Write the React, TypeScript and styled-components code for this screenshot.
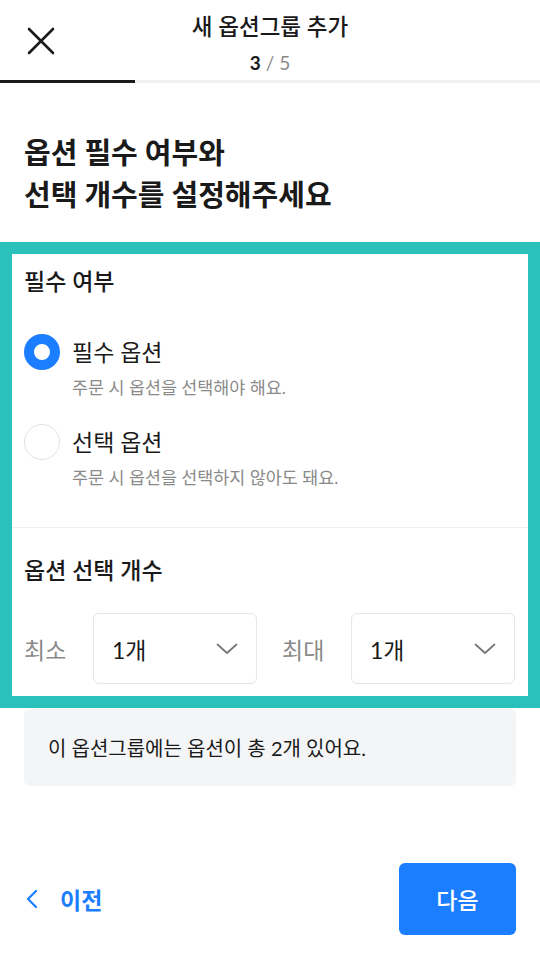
import React from "react";
import styled, { createGlobalStyle } from "styled-components";

const Global = createGlobalStyle`
  * { box-sizing: border-box; }
  html, body { margin: 0; padding: 0; background: #fff; }
  body { font-family: Lato, "Noto Sans CJK KR", sans-serif; color: #1a1a1a; }
`;

const Page = styled.div`
  width: 540px;
  height: 960px;
  display: flex;
  flex-direction: column;
  background: #fff;
  overflow: hidden;
`;

const Header = styled.header`
  position: relative;
  height: 80px;
  display: flex;
  flex-direction: column;
  align-items: center;
  padding-top: 12px;
`;

const CloseButton = styled.button`
  position: absolute;
  left: 26px;
  top: 26px;
  width: 30px;
  height: 30px;
  padding: 0;
  border: none;
  background: none;
  display: flex;
  align-items: center;
  justify-content: center;
`;

const Title = styled.h1`
  margin: 0;
  font-size: 22.5px;
  line-height: 30px;
  font-weight: 500;
  color: #1a1a1a;
`;

const Step = styled.div`
  margin-top: 10px;
  font-size: 19px;
  line-height: 22px;
  color: #8a8a8a;
  b { color: #1a1a1a; font-weight: 700; }
`;

const Progress = styled.div`
  height: 3px;
  background: #f2f2f2;
`;

const ProgressFill = styled.div`
  height: 100%;
  background: #1a1a1a;
`;

const Heading = styled.h2`
  margin: 49px 24px 0;
  font-size: 29px;
  line-height: 42px;
  font-weight: 700;
  color: #1a1a1a;
`;

const Highlight = styled.section`
  margin-top: 26px;
  border: 12px solid #2cc0bb;
  background: #fff;
`;

const Group = styled.div<{ $divider?: boolean }>`
  padding: ${(p) => (p.$divider ? "27px" : "12px")} 12px 0;
  border-top: ${(p) => (p.$divider ? "1px solid #efefef" : "none")};
`;

const GroupTitle = styled.h3`
  margin: 0;
  font-size: 23px;
  line-height: 30px;
  font-weight: 500;
  color: #1a1a1a;
`;

const RadioList = styled.div`
  margin-top: 40px;
  display: flex;
  flex-direction: column;
  gap: 26px;
  padding-bottom: 37px;
`;

const RadioRow = styled.label`
  display: flex;
  gap: 12px;
  align-items: flex-start;
`;

const RadioCircle = styled.span<{ $checked?: boolean }>`
  flex: none;
  width: 36px;
  height: 36px;
  margin-top: -2px;
  border-radius: 50%;
  background: #fff;
  border: ${(p) => (p.$checked ? "10px solid #1b7dff" : "1.5px solid #e3e3e3")};
`;

const RadioText = styled.div`
  display: flex;
  flex-direction: column;
`;

const RadioLabel = styled.span`
  font-size: 23px;
  line-height: 32px;
  color: #1a1a1a;
`;

const RadioDesc = styled.span`
  margin-top: 8px;
  font-size: 17.4px;
  line-height: 24px;
  color: #8a8a8a;
`;

const CountRow = styled.div`
  margin-top: 28px;
  display: flex;
  align-items: center;
  padding-bottom: 12px;
`;

const CountLabel = styled.span<{ $second?: boolean }>`
  flex: none;
  width: 69px;
  margin-left: ${(p) => (p.$second ? "25px" : "0")};
  font-size: 23px;
  color: #8a8a8a;
`;

const Select = styled.div`
  width: 164px;
  height: 71px;
  border: 1px solid #e6e6e6;
  border-radius: 6px;
  display: flex;
  align-items: center;
  justify-content: space-between;
  padding: 0 18px 0 18px;
  font-size: 23px;
  color: #1a1a1a;
`;

const InfoBox = styled.div`
  margin: 1px 24px 0;
  height: 77px;
  background: #f4f5f7;
  border-radius: 6px;
  display: flex;
  align-items: center;
  padding: 0 24px;
  font-size: 20px;
  color: #1a1a1a;
`;

const Footer = styled.footer`
  margin-top: 77px;
  padding: 0 24px 0 26px;
  display: flex;
  align-items: center;
  justify-content: space-between;
`;

const PrevButton = styled.button`
  border: none;
  background: none;
  padding: 0;
  display: flex;
  align-items: center;
  gap: 22px;
  font-family: inherit;
  font-size: 23px;
  font-weight: 700;
  color: #1b7dff;
`;

const NextButton = styled.button`
  width: 117px;
  height: 72px;
  border: none;
  border-radius: 6px;
  background: #1b7dff;
  color: #fff;
  font-family: inherit;
  font-size: 23px;
  font-weight: 500;
`;

const Chevron = () => (
  <svg width="22" height="12" viewBox="0 0 22 12" fill="none">
    <path d="M1.5 1.5 L11 10 L20.5 1.5" stroke="#777" strokeWidth="1.8" strokeLinecap="round" strokeLinejoin="round" />
  </svg>
);

export default function App() {
  return (
    <Page>
      <Global />
      <Header>
        <CloseButton aria-label="닫기">
          <svg width="28" height="28" viewBox="0 0 28 28" fill="none">
            <path d="M2 2 L26 26 M26 2 L2 26" stroke="#1a1a1a" strokeWidth="2.6" strokeLinecap="round" />
          </svg>
        </CloseButton>
        <Title>새 옵션그룹 추가</Title>
        <Step>
          <b>3</b> / 5
        </Step>
      </Header>
      <Progress>
        <ProgressFill style={{ width: "25%" }} />
      </Progress>

      <Heading>
        옵션 필수 여부와
        <br />
        선택 개수를 설정해주세요
      </Heading>

      <Highlight>
        <Group>
          <GroupTitle>필수 여부</GroupTitle>
          <RadioList>
            <RadioRow>
              <RadioCircle $checked />
              <RadioText>
                <RadioLabel>필수 옵션</RadioLabel>
                <RadioDesc>주문 시 옵션을 선택해야 해요.</RadioDesc>
              </RadioText>
            </RadioRow>
            <RadioRow>
              <RadioCircle />
              <RadioText>
                <RadioLabel>선택 옵션</RadioLabel>
                <RadioDesc>주문 시 옵션을 선택하지 않아도 돼요.</RadioDesc>
              </RadioText>
            </RadioRow>
          </RadioList>
        </Group>
        <Group $divider>
          <GroupTitle>옵션 선택 개수</GroupTitle>
          <CountRow>
            <CountLabel>최소</CountLabel>
            <Select>
              <span>1개</span>
              <Chevron />
            </Select>
            <CountLabel $second>최대</CountLabel>
            <Select>
              <span>1개</span>
              <Chevron />
            </Select>
          </CountRow>
        </Group>
      </Highlight>

      <InfoBox>이 옵션그룹에는 옵션이 총 2개 있어요.</InfoBox>

      <Footer>
        <PrevButton>
          <svg width="12" height="20" viewBox="0 0 12 20" fill="none">
            <path d="M10 2 L2 10 L10 18" stroke="#1b7dff" strokeWidth="2.2" strokeLinecap="round" strokeLinejoin="round" />
          </svg>
          이전
        </PrevButton>
        <NextButton>다음</NextButton>
      </Footer>
    </Page>
  );
}
